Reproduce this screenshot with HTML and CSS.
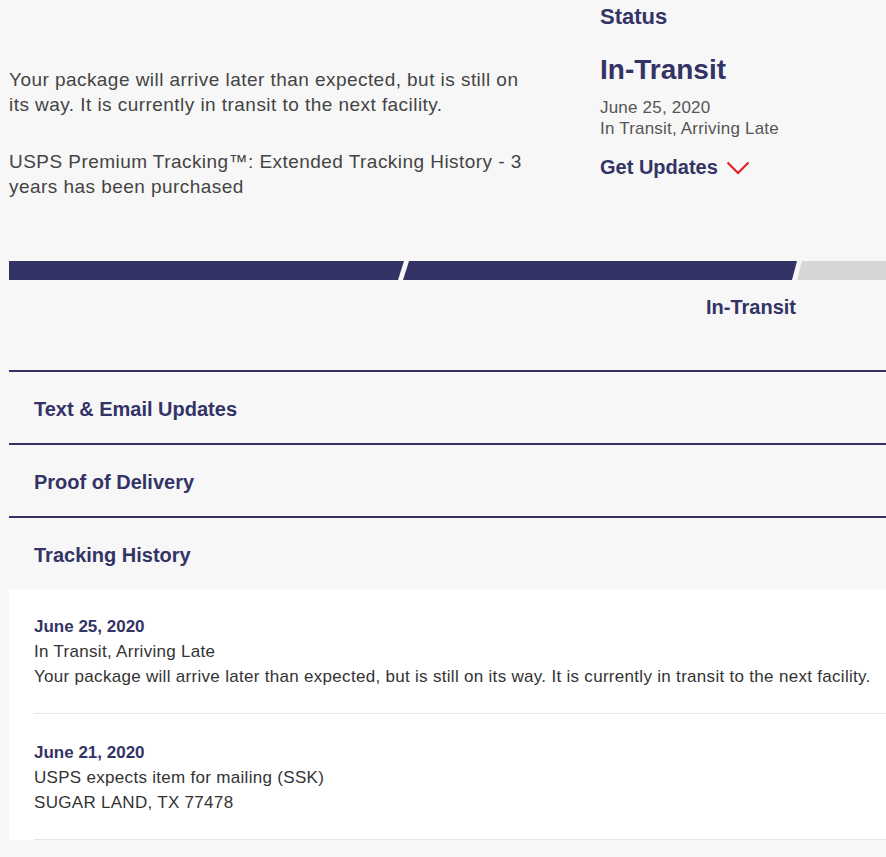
FILE: index.html
```html
<!DOCTYPE html>
<html lang="en">
<head>
<meta charset="utf-8">
<title>USPS Tracking</title>
<link rel="stylesheet" href="styles.css">
</head>
<body>
<div class="page">
  <section class="summary">
    <div class="summary-text">
      <p>Your package will arrive later than expected, but is still on its way. It is currently in transit to the next facility.</p>
      <p class="premium">USPS Premium Tracking™: Extended Tracking History - 3 years has been purchased</p>
    </div>
    <div class="status">
      <h2 class="status-label">Status</h2>
      <h1 class="status-title">In-Transit</h1>
      <div class="status-date">June 25, 2020</div>
      <div class="status-detail">In Transit, Arriving Late</div>
      <div class="get-updates">Get Updates
        <svg class="chevron" width="24" height="14" viewBox="0 0 24 14"><polyline points="1.5,1.5 12,12 22.5,1.5" fill="none" stroke="#e71921" stroke-width="2"/></svg>
      </div>
    </div>
  </section>

  <div class="progress">
    <svg class="bar" width="877" height="19" viewBox="0 0 877 19">
      <polygon points="0,0 395,0 389,19 0,19" fill="#333366"/>
      <polygon points="400,0 788,0 783,19 394,19" fill="#333366"/>
      <polygon points="793,0 877,0 877,19 788,19" fill="#d6d6d6"/>
    </svg>
    <div class="progress-labels">
      <span class="stage"></span>
      <span class="stage current">In-Transit</span>
      <span class="stage"></span>
    </div>
  </div>

  <div class="panels">
    <div class="panel">Text &amp; Email Updates</div>
    <div class="panel">Proof of Delivery</div>
    <div class="panel">Tracking History</div>
  </div>

  <div class="history">
    <div class="event">
      <div class="event-date">June 25, 2020</div>
      <div class="event-line">In Transit, Arriving Late</div>
      <div class="event-line">Your package will arrive later than expected, but is still on its way. It is currently in transit to the next facility.</div>
    </div>
    <div class="event">
      <div class="event-date">June 21, 2020</div>
      <div class="event-line">USPS expects item for mailing (SSK)</div>
      <div class="event-line">SUGAR LAND, TX 77478</div>
    </div>
  </div>
</div>
</body>
</html>
```
FILE: styles.css
```css
html, body {
  margin: 0;
  padding: 0;
  background: #f7f7f7;
  overflow: hidden;
}
body {
  font-family: "Liberation Sans", Arial, sans-serif;
  color: #333;
}
.page {
  padding-left: 9px;
}
.summary {
  display: flex;
}
.summary-text {
  width: 591px;
  flex: none;
  padding-top: 67px;
  color: #444;
  font-size: 19px;
  letter-spacing: 0.45px;
  line-height: 25px;
}
.summary-text p {
  margin: 0;
  width: 530px;
}
.summary-text .premium {
  margin-top: 32px;
}
.status {
  padding-top: 5px;
  color: #333366;
}
.status-label {
  margin: 0;
  font-size: 22px;
  line-height: 24px;
  font-weight: bold;
}
.status-title {
  margin: 24px 0 0;
  font-size: 28px;
  line-height: 34px;
  font-weight: bold;
}
.status-date, .status-detail {
  font-size: 17px;
  letter-spacing: 0.2px;
  line-height: 21px;
  color: #555;
}
.status-date {
  margin-top: 10px;
}
.get-updates {
  margin-top: 16px;
  font-size: 20px;
  line-height: 24px;
  font-weight: bold;
  display: flex;
  align-items: center;
  gap: 8px;
}
.chevron {
  display: block;
  margin-top: 2px;
}
.progress {
  margin-top: 62px;
}
.bar {
  display: block;
}
.progress-labels {
  display: grid;
  grid-template-columns: 395px 393px 1fr;
  margin-top: 16px;
}
.stage {
  font-size: 20px;
  line-height: 22px;
  font-weight: bold;
  color: #333366;
}
.stage.current {
  text-align: right;
  padding-right: 1px;
}
.panels {
  margin-top: 52px;
}
.panel {
  border-top: 2px solid #333366;
  padding: 25px 25px 22px;
  font-size: 20px;
  line-height: 24px;
  font-weight: bold;
  color: #333366;
}
.history {
  background: #fff;
  padding-left: 25px;
}
.event {
  padding: 26px 0 24px;
  border-bottom: 1px solid #e6e6e6;
  font-size: 17px;
  line-height: 25px;
}
.event:first-child {
  padding-top: 25px;
}
.event-date {
  font-weight: bold;
  color: #333366;
}
.event-line {
  color: #333;
  letter-spacing: 0.3px;
}
```
